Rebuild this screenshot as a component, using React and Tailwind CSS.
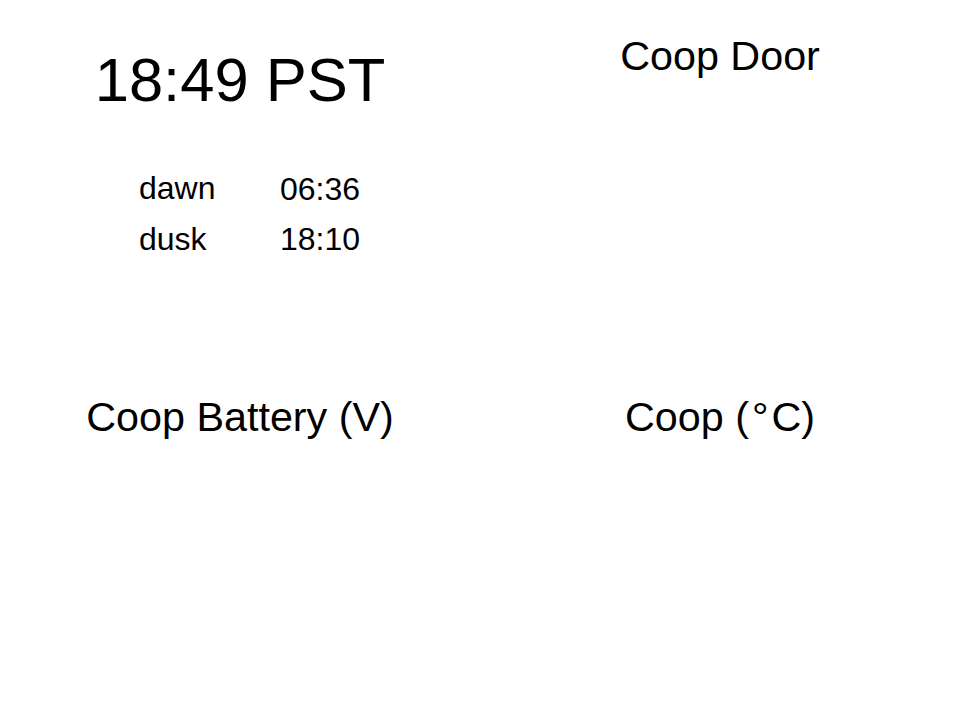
export default function App() {
  const font = { fontFamily: '"Liberation Sans", Arial, Helvetica, sans-serif' };

  return (
    <div
      className="w-[960px] h-[720px] bg-white text-black grid grid-cols-2 grid-rows-2"
      style={font}
    >
      {/* clock + sun times */}
      <div className="pt-[49px]">
        <div className="text-center text-[61.5px] leading-none">18:49 PST</div>
        <div className="mt-[62px] pl-[139px] flex flex-col gap-[18px] text-[32px] leading-none">
          <div className="flex">
            <span className="w-[141px] -translate-y-[1px]">dawn</span>
            <span>06:36</span>
          </div>
          <div className="flex">
            <span className="w-[141px]">dusk</span>
            <span>18:10</span>
          </div>
        </div>
      </div>

      {/* door */}
      <div className="pt-[36px] text-center text-[41.3px] leading-none">Coop Door</div>

      {/* battery */}
      <div className="pt-[37px] text-center text-[41.3px] leading-none">Coop Battery (V)</div>

      {/* temperature */}
      <div className="pt-[37px] text-center text-[41.3px] leading-none">
        Coop (<span className="px-[3px]">°</span>C)
      </div>
    </div>
  );
}
